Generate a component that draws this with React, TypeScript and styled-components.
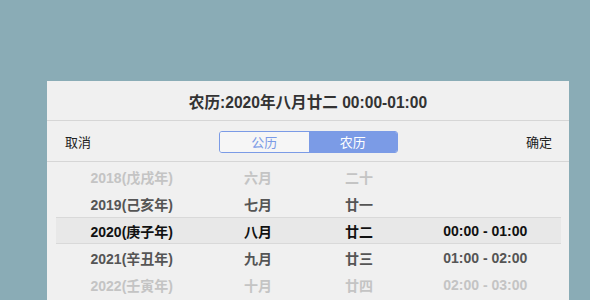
import React from "react";
import styled, { createGlobalStyle } from "styled-components";

const GlobalStyle = createGlobalStyle`
  html, body {
    margin: 0;
    padding: 0;
    background: #8aacb6;
  }
  body {
    font-family: "Liberation Sans", "Noto Sans CJK SC", sans-serif;
  }
`;

type Tone = "far" | "near" | "active";

interface PickerRow {
  year: string;
  month: string;
  day: string;
  time: string;
  tone: Tone;
}

const rows: PickerRow[] = [
  { year: "2018(戊戌年)", month: "六月", day: "二十", time: "", tone: "far" },
  { year: "2019(己亥年)", month: "七月", day: "廿一", time: "", tone: "near" },
  { year: "2020(庚子年)", month: "八月", day: "廿二", time: "00:00 - 01:00", tone: "active" },
  { year: "2021(辛丑年)", month: "九月", day: "廿三", time: "01:00 - 02:00", tone: "near" },
  { year: "2022(壬寅年)", month: "十月", day: "廿四", time: "02:00 - 03:00", tone: "far" },
];

const toneColor: Record<Tone, string> = {
  far: "#c4c4c4",
  near: "#555555",
  active: "#111111",
};

export default function App() {
  return (
    <Page>
      <GlobalStyle />
      <Panel>
        <Header>农历:2020年八月廿二 00:00-01:00</Header>
        <Toolbar>
          <Action>取消</Action>
          <Toggle>
            <ToggleItem>公历</ToggleItem>
            <ToggleItem $active>农历</ToggleItem>
          </Toggle>
          <Action $right>确定</Action>
        </Toolbar>
        <Picker>
          {rows.map((r) => (
            <Row key={r.year} $tone={r.tone}>
              <Cell>{r.year}</Cell>
              <Cell>{r.month}</Cell>
              <Cell>{r.day}</Cell>
              <Cell>{r.time}</Cell>
            </Row>
          ))}
        </Picker>
      </Panel>
    </Page>
  );
}

const Page = styled.div`
  height: 300px;
  overflow: hidden;
  padding: 81px 21px 0 47px;
  box-sizing: border-box;
`;

const Panel = styled.div`
  width: 522px;
  height: 219px;
  background: #f0f0f0;
`;

const Header = styled.div`
  height: 39px;
  border-bottom: 1px solid #d6d6d6;
  display: flex;
  align-items: center;
  justify-content: center;
  font-size: 15.6px;
  font-weight: 700;
  color: #333;
`;

const Toolbar = styled.div`
  height: 40px;
  border-bottom: 1px solid #d6d6d6;
  display: grid;
  grid-template-columns: 1fr auto 1fr;
  align-items: center;
  padding: 0 17px 0 18px;
`;

const Action = styled.div<{ $right?: boolean }>`
  font-size: 13px;
  color: #222;
  text-align: ${(p) => (p.$right ? "right" : "left")};
`;

const Toggle = styled.div`
  display: flex;
  width: 179px;
  height: 22px;
  box-sizing: border-box;
  border: 1px solid #7b9be6;
  border-radius: 3px;
  overflow: hidden;
  margin-top: 1px;
`;

const ToggleItem = styled.div<{ $active?: boolean }>`
  flex: 1;
  display: flex;
  align-items: center;
  justify-content: center;
  font-size: 13px;
  color: ${(p) => (p.$active ? "#ffffff" : "#7b9be6")};
  background: ${(p) => (p.$active ? "#7b9be6" : "#f6f6f6")};
`;

const Picker = styled.div`
  padding: 1px 8px 0 9px;
`;

const Row = styled.div<{ $tone: Tone }>`
  display: grid;
  grid-template-columns: 3fr 2fr 2fr 3fr;
  align-items: center;
  height: 27px;
  box-sizing: border-box;
  font-size: 14px;
  font-weight: 700;
  color: ${(p) => toneColor[p.$tone]};
  background: ${(p) => (p.$tone === "active" ? "#e8e8e8" : "transparent")};
  border-top: 1px solid
    ${(p) => (p.$tone === "active" ? "#d9d9d9" : "transparent")};
  border-bottom: 1px solid
    ${(p) => (p.$tone === "active" ? "#d9d9d9" : "transparent")};
`;

const Cell = styled.div`
  text-align: center;
  white-space: nowrap;
`;
